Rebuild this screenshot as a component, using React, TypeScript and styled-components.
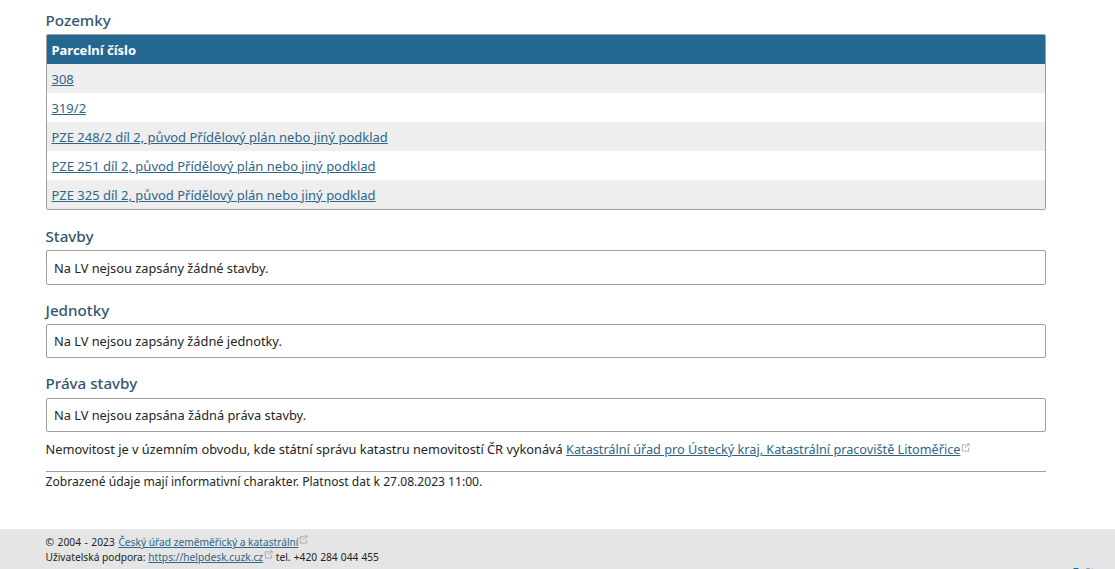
import React from "react";
import styled, { createGlobalStyle } from "styled-components";

const Global = createGlobalStyle`
  html, body { margin: 0; padding: 0; background: #fff; height: 569px; overflow: hidden; }
  body { font-family: "Noto Sans", "Open Sans", sans-serif; font-size: 13px; color: #212529; }
  * { box-sizing: border-box; }
`;

const Page = styled.div`
  height: 569px;
  display: flex;
  flex-direction: column;
  overflow: hidden;
`;

const Main = styled.main`
  width: 1000.5px;
  margin-left: 45.5px;
  height: 529px;
  padding-top: 10px;
`;

const Heading = styled.h2<{ $top?: number; $bottom?: number }>`
  margin: ${(p) => p.$top ?? 0}px 0 ${(p) => p.$bottom ?? 4}px;
  font-size: 15.2px;
  line-height: 20px;
  font-weight: 500;
  color: #34566f;
`;

const Table = styled.div`
  border: 1px solid #a0a0a0;
  border-radius: 2px;
  overflow: hidden;
`;

const HeadRow = styled.div`
  height: 29px;
  background: #246892;
  color: #fff;
  font-weight: 700;
  font-size: 13px;
  line-height: 31px;
  padding-left: 5px;
`;

const Row = styled.div<{ $odd: boolean }>`
  height: 29px;
  line-height: 31px;
  padding-left: 5px;
  background: ${(p) => (p.$odd ? "#eeeeee" : "#ffffff")};
`;

const Link = styled.a`
  color: #2f6587;
  text-decoration: underline;
`;

const OfficeLink = styled(Link)`
  font-size: 12.68px;
`;

const Notice = styled.div<{ $h: number }>`
  height: ${(p) => p.$h}px;
  border: 1px solid #a0a0a0;
  border-radius: 2px;
  padding-left: 7.5px;
  display: flex;
  align-items: center;
  font-size: 12.8px;
  color: #212529;
`;

const Paragraph = styled.p`
  margin: 7px 0 0;
  line-height: 20px;
  font-size: 12.8px;
  white-space: nowrap;
`;

const Rule = styled.hr`
  border: 0;
  border-top: 1px solid #a0a0a0;
  margin: 12px 0 0;
`;

const Note = styled.p`
  margin: 1px 0 0;
  line-height: 18px;
  font-size: 12.1px;
`;

const Footer = styled.footer`
  position: relative;
  flex: 1;
  background: #e5e5e5;
  padding: 6px 0 0 45.5px;
  font-size: 10.2px;
  line-height: 15px;
  color: #222;
`;

const FooterLine = styled.div`
  white-space: nowrap;
`;

const CopyPrefix = styled.span`
  word-spacing: 0.8px;
  letter-spacing: 0.05px;
`;

const Phone = styled.span`
  word-spacing: 0.5px;
`;

const BackTop = styled.a`
  position: absolute;
  left: 1073px;
  top: 36px;
  color: #2f6587;
  font-size: 10.2px;
  line-height: 15px;
`;

const ExtIcon = styled.svg`
  width: 9px;
  height: 9px;
  margin-left: 1px;
  vertical-align: 2px;
  fill: none;
  stroke: #a8a8a8;
  stroke-width: 1;
`;

const External = () => (
  <ExtIcon viewBox="0 0 10 10">
    <path d="M6 2H1.5v7h7V5" />
    <path d="M4.5 5.5 9 1M6.5 1H9v2.5" />
  </ExtIcon>
);

const parcels = [
  "308",
  "319/2",
  "PZE 248/2 díl 2, původ Přídělový plán nebo jiný podklad",
  "PZE 251 díl 2, původ Přídělový plán nebo jiný podklad",
  "PZE 325 díl 2, původ Přídělový plán nebo jiný podklad",
];

export default function App() {
  return (
    <Page>
      <Global />
      <Main>
        <Heading>Pozemky</Heading>
        <Table>
          <HeadRow>Parcelní číslo</HeadRow>
          {parcels.map((p, i) => (
            <Row key={p} $odd={i % 2 === 0}>
              <Link href="#">{p}</Link>
            </Row>
          ))}
        </Table>
        <Heading $top={16}>Stavby</Heading>
        <Notice $h={35}>Na LV nejsou zapsány žádné stavby.</Notice>
        <Heading $top={15}>Jednotky</Heading>
        <Notice $h={34}>Na LV nejsou zapsány žádné jednotky.</Notice>
        <Heading $top={15} $bottom={5}>Práva stavby</Heading>
        <Notice $h={34}>Na LV nejsou zapsána žádná práva stavby.</Notice>
        <Paragraph>
          Nemovitost je v územním obvodu, kde státní správu katastru nemovitostí ČR vykonává{" "}
          <OfficeLink href="#">Katastrální úřad pro Ústecký kraj, Katastrální pracoviště Litoměřice</OfficeLink>
          <External />
        </Paragraph>
        <Rule />
        <Note>Zobrazené údaje mají informativní charakter. Platnost dat k 27.08.2023 11:00.</Note>
      </Main>
      <Footer>
        <FooterLine>
          <CopyPrefix>© 2004 - 2023 </CopyPrefix>
          <Link href="#">Český úřad zeměměřický a katastrální</Link>
          <External />
        </FooterLine>
        <FooterLine>
          Uživatelská podpora: <Link href="#">https://helpdesk.cuzk.cz</Link>
          <External /> <Phone>tel. +420 284 044 455</Phone>
        </FooterLine>
        <BackTop>Zpět nahoru</BackTop>
      </Footer>
    </Page>
  );
}
